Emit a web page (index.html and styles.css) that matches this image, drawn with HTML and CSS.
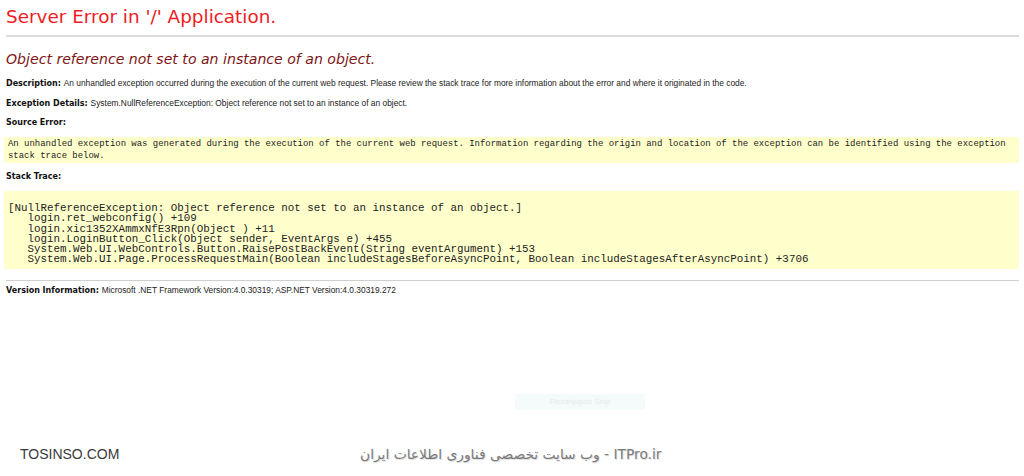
FILE: index.html
```html
<!DOCTYPE html>
<html lang="en">
<head>
<meta charset="utf-8">
<title>Server Error in '/' Application.</title>
<link rel="stylesheet" href="styles.css">
</head>
<body>
<div class="page">
  <h1 class="title">Server Error in '/' Application.</h1>
  <hr class="rule">
  <h2 class="subtitle">Object reference not set to an instance of an object.</h2>

  <p class="info first"><b class="label">Description: </b><span class="txt">An unhandled exception occurred during the execution of the current web request. Please review the stack trace for more information about the error and where it originated in the code.</span></p>
  <p class="info"><b class="label">Exception Details: </b><span class="txt">System.NullReferenceException: Object reference not set to an instance of an object.</span></p>
  <p class="info"><b class="label">Source Error:</b></p>
  <pre class="box src">An unhandled exception was generated during the execution of the current web request. Information regarding the origin and location of the exception can be identified using the exception
stack trace below.</pre>
  <p class="info"><b class="label">Stack Trace:</b></p>
  <pre class="box trace">[NullReferenceException: Object reference not set to an instance of an object.]
   login.ret_webconfig() +109
   login.xic1352XAmmxNfE3Rpn(Object ) +11
   login.LoginButton_Click(Object sender, EventArgs e) +455
   System.Web.UI.WebControls.Button.RaisePostBackEvent(String eventArgument) +153
   System.Web.UI.Page.ProcessRequestMain(Boolean includeStagesBeforeAsyncPoint, Boolean includeStagesAfterAsyncPoint) +3706</pre>
  <hr class="rule thin">
  <p class="info version"><b class="label">Version Information: </b><span class="txt">Microsoft .NET Framework Version:4.0.30319; ASP.NET Version:4.0.30319.272</span></p>

  <div class="snip-row"><span class="snip">Rezanjupas Snip</span></div>

  <div class="footer">
    <span class="brand">TOSINSO.COM</span>
    <span class="fa" dir="rtl">ITPro.ir - وب سایت تخصصی فناوری اطلاعات ایران</span>
  </div>
</div>
</body>
</html>
```
FILE: styles.css
```css
html, body {
  margin: 0;
  padding: 0;
  background: #ffffff;
}
.page {
  width: 1024px;
  height: 476px;
  box-sizing: border-box;
  padding: 0 5px 0 6px;
  display: flex;
  flex-direction: column;
  font-family: "DejaVu Sans", Verdana, sans-serif;
  color: #000;
  overflow: hidden;
}
.title {
  margin: 6px 0 0 0;
  font-weight: normal;
  font-size: 18.4px;
  line-height: 22px;
  color: #ee1c24;
}
.rule {
  margin: 7px 0 0 0;
  border: 0;
  height: 2px;
  background: #dcdcdc;
}
.rule.thin {
  height: 1px;
  margin: 11px 0 0 0;
  background: #cfcfcf;
}
.subtitle {
  margin: 13px 0 0 0;
  font-weight: normal;
  font-style: italic;
  font-size: 14.1px;
  line-height: 18px;
  color: #7d1616;
}
.info {
  margin: 9px 0 0 0;
  font-size: 8px;
  line-height: 10px;
}
.info.first {
  margin-top: 10px;
}
.info.version {
  margin-top: 4px;
}
.label {
  font-family: "DejaVu Sans", Verdana, sans-serif;
  font-weight: bold;
  color: #111;
}
.txt {
  font-family: "Liberation Sans", Arial, sans-serif;
  font-size: 8.4px;
  color: #222;
}
.box {
  margin: 0;
  background: #ffffcc;
  font-family: "Liberation Mono", "Courier New", monospace;
  color: #222;
  margin-left: -2px;
  padding-left: 4px;
}
.src {
  margin-top: 9px;
  font-size: 8.95px;
  line-height: 12px;
  padding-top: 1px;
  padding-bottom: 1px;
}
.trace {
  margin-top: 9px;
  font-size: 10.85px;
  line-height: 10.3px;
  padding-top: 12px;
  padding-bottom: 4px;
}
.snip-row {
  display: flex;
  margin-top: 98px;
  padding-left: 509px;
}
.snip {
  width: 130px;
  height: 16px;
  background: #f5fafa;
  color: #e6eaea;
  font-family: "Liberation Sans", Arial, sans-serif;
  font-size: 8px;
  line-height: 16px;
  text-align: center;
}
.footer {
  display: flex;
  align-items: center;
  margin-top: 36px;
  padding-left: 14px;
}
.brand {
  font-family: "Liberation Sans", Arial, sans-serif;
  font-size: 14px;
  color: #3a3a3a;
  width: 340px;
}
.fa {
  font-family: "DejaVu Sans", sans-serif;
  font-size: 13.8px;
  color: #7a7a7a;
  text-shadow: 1px 1px 0 #e0e0e0;
}
```
